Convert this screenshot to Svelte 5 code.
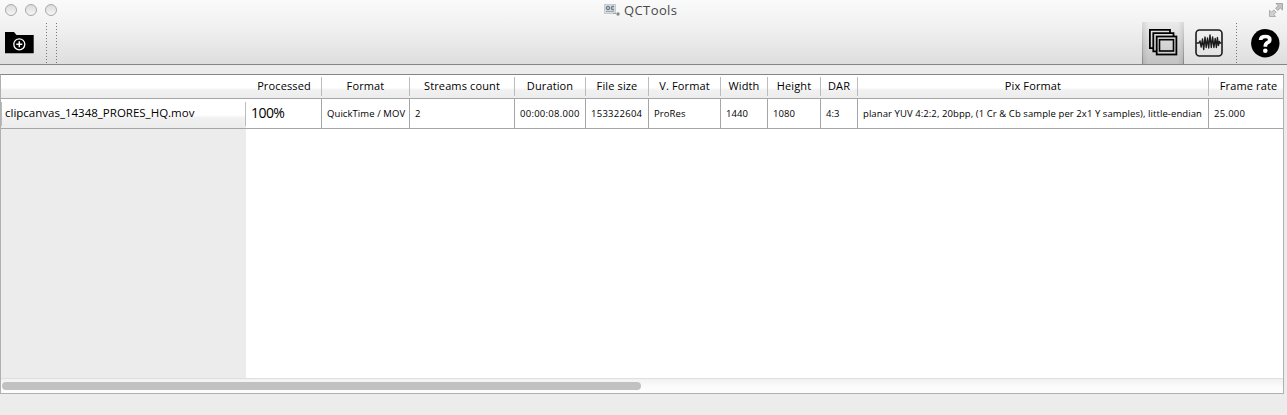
<script>
  const columns = [
    { label: 'Processed', value: '100%', width: 75, large: true },
    { label: 'Format', value: 'QuickTime / MOV', width: 88 },
    { label: 'Streams count', value: '2', width: 105 },
    { label: 'Duration', value: '00:00:08.000', width: 71, wide: true },
    { label: 'File size', value: '153322604', width: 63, wide: true },
    { label: 'V. Format', value: 'ProRes', width: 72 },
    { label: 'Width', value: '1440', width: 47 },
    { label: 'Height', value: '1080', width: 53 },
    { label: 'DAR', value: '4:3', width: 37 },
    { label: 'Pix Format', value: 'planar YUV 4:2:2, 20bpp, (1 Cr & Cb sample per 2x1 Y samples), little-endian', width: 351 },
    { label: 'Frame rate', value: '25.000', width: 80, wide: true }
  ];
  const template = '245px ' + columns.map((c) => c.width + 'px').join(' ');
</script>

<div class="window">
  <header class="chrome">
    <div class="titlebar">
      <div class="lights"><i></i><i></i><i></i></div>
      <div class="title">
        <svg width="17" height="14" viewBox="0 0 17 14">
          <rect x=".5" y="1.5" width="11" height="9" fill="#d5dde2" stroke="#c3cbd0" />
          <circle cx="4" cy="5" r="1.8" fill="#b6bfc5" stroke="#656d72" />
          <path d="M10 3.5H8Q6.800 5 8 6.500H10" fill="none" stroke="#737b80" stroke-width="1.300" />
          <path d="M2 8.500H10M9 10.500H12" stroke="#9ca7ad" />
          <circle cx="14" cy="11" r="1.700" fill="#888" />
        </svg>
        <span>QCTools</span>
      </div>
      <svg class="expand" width="16" height="16" viewBox="0 0 16 16">
        <path d="M8 1.500H14.500V8L12.300 5.900L9.800 8.400L7.600 6.200L10.100 3.700Z" fill="#c4c4c4" stroke="#999" stroke-width=".8" />
        <path d="M1.500 8.300L3.500 10.200L5.800 7.900L8.100 10.200L5.800 12.500L7.500 14.500H1.500Z" fill="#d0d0d0" stroke="#a0a0a0" stroke-width=".8" />
      </svg>
    </div>
    <div class="toolbar">
      <svg class="folder" width="29" height="22" viewBox="0 0 29 22">
        <path d="M0 0H9L11.500 3H28.700V21.300H0Z" fill="#000" />
        <circle cx="14.300" cy="12.300" r="5.500" fill="none" stroke="#fff" stroke-width="1.300" />
        <path d="M14.300 9.300V15.300M11.300 12.300H17.300" stroke="#fff" stroke-width="1.500" />
      </svg>
      <b class="dots first"></b><b class="dots second"></b>
      <div class="spacer"></div>
      <div class="active">
        <svg width="30" height="28" viewBox="0 0 30 28">
          <g fill="none" stroke="#000" stroke-width="1.800">
            <path d="M4 19.200H.900V.900H21V4" />
            <path d="M7 22.300H4.300V4.200H24.500V7" />
            <rect x="7.700" y="7.500" width="19.700" height="18" />
            <rect x="10.500" y="10.700" width="14" height="11.300" stroke-width="1.600" />
          </g>
        </svg>
      </div>
      <svg class="wave" width="28" height="28" viewBox="0 0 28 28">
        <rect x="1" y="1" width="26" height="26" rx="3.500" fill="none" stroke="#1c1c1c" stroke-width="1.600" />
        <path d="M1.500 14H4L5 12L6.200 18L7.500 10L8.700 20.500L10 8L11.200 18.500L12.500 9L13.700 19L15 6L16.300 18.500L17.600 8L18.900 18.500L20.200 9.500L21.400 18.500L22.400 8.500L23.400 16.500L24.400 12.500L25 14H26.500" fill="none" stroke="#1c1c1c" stroke-width="1.400" stroke-linejoin="round" />
      </svg>
      <b class="dots third"></b>
      <svg class="help" width="29" height="29" viewBox="0 0 29 29">
        <circle cx="14.300" cy="14.300" r="14.200" fill="#000" />
        <path d="M9.600 11Q9.700 7.500 14.300 7.500Q18.800 7.500 18.800 10.700Q18.800 12.500 16.400 13.700Q14.300 14.800 14.300 17.800" fill="none" stroke="#fff" stroke-width="3.700" />
        <circle cx="14.300" cy="21.700" r="2.300" fill="#fff" />
      </svg>
    </div>
  </header>

  <main class="table">
    <div class="row head" style:grid-template-columns={template}>
      <div></div>
      {#each columns as col}
        <div class="th"><span>{col.label}</span></div>
      {/each}
    </div>
    <div class="row body" style:grid-template-columns={template}>
      <div class="name"><span>clipcanvas_14348_PRORES_HQ.mov</span></div>
      {#each columns as col}
        <div class="td" class:large={col.large} class:wide={col.wide}><span>{col.value}</span></div>
      {/each}
    </div>
    <div class="rest"></div>
    <div class="scroll"><div class="thumb"></div></div>
  </main>
</div>

<style>
  :global(body) { margin: 0; background: #ececec; }
  .window {
    width: 1287px; height: 415px; overflow: hidden; box-sizing: border-box;
    display: flex; flex-direction: column;
    background: #ececec; color: #000;
    font-family: "Open Sans", "Noto Sans", sans-serif;
  }
  .chrome {
    height: 65px; flex: none; box-sizing: border-box; border-bottom: 1px solid #858585;
    background: linear-gradient(#fafafa, #f0f0f0 45%, #dedede);
  }
  .titlebar { height: 22px; display: flex; justify-content: space-between; position: relative; }
  .lights { display: flex; gap: 8px; padding: 4px 0 0 5px; }
  .lights i {
    width: 12px; height: 12px; box-sizing: border-box; border: 1px solid #a8a8a8; border-radius: 50%;
    background: linear-gradient(#dcdcdc, #f5f5f5);
  }
  .title {
    position: absolute; left: 604px; top: 0; display: flex; gap: 3px; align-items: center;
    height: 20px; font-size: 13px; letter-spacing: .4px; color: #484848;
  }
  .expand { margin: 2px 3px 0 0; }
  .toolbar { height: 42px; display: flex; align-items: flex-start; }
  .folder { margin: 10px 0 0 5px; }
  .dots {
    width: 1px; height: 41px; margin-top: 1px;
    background: repeating-linear-gradient(#777 0 1px, transparent 1px 3px);
  }
  .first { margin-left: 12px; }
  .second { margin-left: 9px; }
  .spacer { flex: 1; }
  .active {
    width: 42px; height: 42px; box-sizing: border-box; padding: 7px 0 0 6px;
    border: 1px solid; border-width: 0 1px; border-image: linear-gradient(#e0e0e0, #858585) 1;
    background:
      linear-gradient(90deg, rgba(0, 0, 0, .08), transparent 5px calc(100% - 5px), rgba(0, 0, 0, .08)),
      linear-gradient(#ebebeb, #c2c2c2);
  }
  .wave { margin: 7px 0 0 11px; }
  .third { margin-left: 13px; }
  .help { margin: 7px 7px 0 14px; }

  .table {
    width: 1284px; height: 320px; box-sizing: border-box; margin-top: 9px; overflow: hidden;
    border: 1px solid #b0b0b0; border-top-color: #858585; background: #fff;
    display: flex; flex-direction: column;
  }
  .row { display: grid; flex: none; box-sizing: border-box; border-bottom: 1px solid #a6a6a6; }
  .head {
    height: 24px; background: linear-gradient(#fff 0 55%, #f1f1f1 65%, #ececec);
    font-size: 11px; letter-spacing: .13px;
  }
  .th { display: flex; justify-content: center; padding-left: 1px; line-height: 22px; position: relative; white-space: nowrap; }
  .th::after { content: ""; position: absolute; right: -1px; top: 2px; bottom: 2px; width: 1px; background: #bcbcbc; }
  .body { height: 30px; }
  .name {
    display: flex; box-sizing: border-box; padding-left: 4px; line-height: 28px; position: relative;
    font-size: 11.5px; white-space: nowrap;
    background: linear-gradient(#fff 0 55%, #f1f1f1 65%, #ececec);
  }
  .name::before, .name::after { content: ""; position: absolute; top: 3px; bottom: 2px; width: 1px; background: #bcbcbc; }
  .name::before { left: 0; }
  .name::after { right: 0; }
  .td {
    display: flex; box-sizing: border-box; padding-left: 5px; border-right: 1px solid #a6a6a6;
    position: relative; left: 1px; line-height: 29px; font-size: 9.5px; letter-spacing: .08px; white-space: nowrap;
  }
  .wide { letter-spacing: .27px; }
  .large { font-size: 14px; line-height: 28px; letter-spacing: -.55px; padding-left: 4px; }
  .rest { flex: 1; background: linear-gradient(90deg, #ececec 245px, #fff 245px); }
  .scroll {
    height: 15px; flex: none; box-sizing: border-box; border-top: 1px solid #dfdfdf; padding: 3px 0 0 1px;
    background: linear-gradient(#f1f1f1, #fcfcfc 60%);
  }
  .thumb { width: 639px; height: 8px; border-radius: 4px; background: #c1c1c1; }
</style>
